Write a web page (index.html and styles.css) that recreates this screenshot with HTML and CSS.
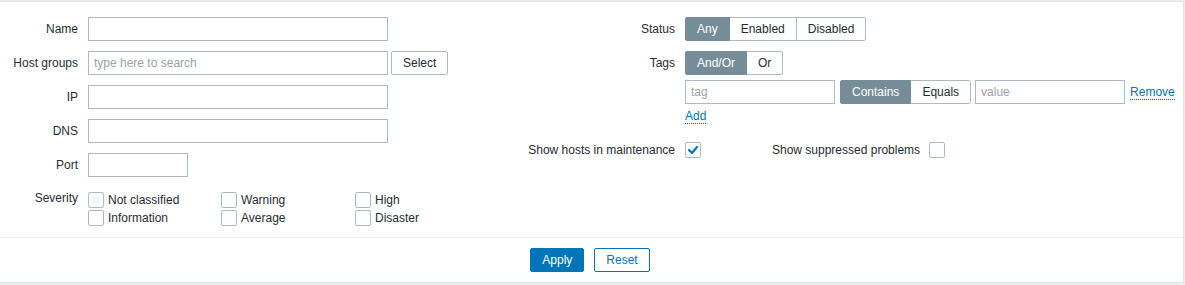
FILE: index.html
```html
<!DOCTYPE html>
<html>

<head>
    <meta name="viewport" content="width=device-width, initial-scale=1">
    <link rel="stylesheet" href="styles.css">
</head>

<body>

    <div class="filter-container">
        <div class="filter-form">

            <!-- Left column -->
            <div class="form-col col-left">
                <label class="form-label">Name</label>
                <div class="form-field"><input type="text" class="input-text wide"></div>

                <label class="form-label">Host groups</label>
                <div class="form-field">
                    <input type="text" class="input-text wide" placeholder="type here to search">
                    <button class="btn-alt btn-select">Select</button>
                </div>

                <label class="form-label">IP</label>
                <div class="form-field"><input type="text" class="input-text wide"></div>

                <label class="form-label">DNS</label>
                <div class="form-field"><input type="text" class="input-text wide"></div>

                <label class="form-label">Port</label>
                <div class="form-field"><input type="text" class="input-text narrow"></div>

                <label class="form-label label-list">Severity</label>
                <ul class="check-list">
                    <li><span class="checkbox"></span>Not classified</li>
                    <li><span class="checkbox"></span>Warning</li>
                    <li><span class="checkbox"></span>High</li>
                    <li><span class="checkbox"></span>Information</li>
                    <li><span class="checkbox"></span>Average</li>
                    <li><span class="checkbox"></span>Disaster</li>
                </ul>
            </div>

            <!-- Right column -->
            <div class="form-col col-right">
                <label class="form-label">Status</label>
                <div class="form-field">
                    <ul class="radio-list">
                        <li class="selected">Any</li>
                        <li>Enabled</li>
                        <li>Disabled</li>
                    </ul>
                </div>

                <label class="form-label">Tags</label>
                <div class="tags-field">
                    <ul class="radio-list">
                        <li class="selected">And/Or</li>
                        <li>Or</li>
                    </ul>
                    <div class="tag-row">
                        <input type="text" class="input-text tag-input" placeholder="tag">
                        <ul class="radio-list">
                            <li class="selected">Contains</li>
                            <li>Equals</li>
                        </ul>
                        <input type="text" class="input-text tag-input value-input" placeholder="value">
                        <a class="link-action remove-link">Remove</a>
                    </div>
                    <div class="add-row"><a class="link-action">Add</a></div>
                </div>

                <label class="form-label">Show hosts in maintenance</label>
                <div class="form-field">
                    <span class="checkbox checked">
                        <svg width="14" height="14" viewBox="0 0 14 14">
                            <polyline points="3,7 6,10 11,4" fill="none" stroke="#0275b8" stroke-width="2.2" stroke-linecap="round" stroke-linejoin="round" />
                        </svg>
                    </span>
                    <span class="suppressed-label">Show suppressed problems</span>
                    <span class="checkbox"></span>
                </div>
            </div>

        </div>

        <div class="filter-buttons">
            <button class="btn-apply">Apply</button>
            <button class="btn-reset">Reset</button>
        </div>
    </div>

</body>

</html>
```

FILE: styles.css
```css
html,
body {
    margin: 0;
    padding: 0;
}

body {
    background-color: #ebeef0;
    padding-top: 1px;
    padding-right: 1px;
    font-family: "Liberation Sans", Arial, sans-serif;
    font-size: 12px;
    color: #1f2c33;
}

.filter-container {
    background-color: #fff;
    border: 1px solid #dfe4e7;
    border-left: none;
    height: 282px;
    box-sizing: border-box;
}

.filter-form {
    display: flex;
    padding: 15px 0 10px;
    height: 235px;
    box-sizing: border-box;
}

.form-col {
    display: grid;
    column-gap: 10px;
    row-gap: 10px;
    align-content: start;
    align-items: start;
}

.col-left {
    width: 460px;
    grid-template-columns: 78px auto;
}

.col-right {
    grid-template-columns: 215px auto;
}

.form-label {
    text-align: right;
    line-height: 24px;
    white-space: nowrap;
}

.label-list {
    padding-top: 2px;
    line-height: 18px;
}

.form-field {
    display: flex;
    align-items: center;
    height: 24px;
}

.input-text {
    height: 24px;
    box-sizing: border-box;
    border: 1px solid #acbbc2;
    border-radius: 0;
    padding: 0 5px;
    margin: 0;
    font-family: inherit;
    font-size: 12px;
    color: #1f2c33;
    background-color: #fff;
    outline: none;
}

.input-text::placeholder {
    color: #9ba3a8;
}

.wide {
    width: 300px;
}

.narrow {
    width: 100px;
}

.btn-alt {
    height: 24px;
    box-sizing: border-box;
    border: 1px solid #acbbc2;
    border-radius: 2px;
    background-color: #fff;
    color: #1f2c33;
    font-family: inherit;
    font-size: 12px;
    padding: 0 11px;
    cursor: pointer;
}

.btn-select {
    margin-left: 3px;
    width: 57px;
}

/* Severity checkboxes */
.check-list {
    list-style: none;
    margin: 0;
    padding: 4px 0 0;
    display: grid;
    grid-template-columns: 133px 134px auto;
}

.check-list li {
    display: flex;
    align-items: center;
    height: 18px;
    white-space: nowrap;
}

.checkbox {
    display: inline-flex;
    align-items: center;
    justify-content: center;
    width: 16px;
    height: 16px;
    box-sizing: border-box;
    border: 1px solid #acbbc2;
    border-radius: 2px;
    background-color: #fff;
    flex-shrink: 0;
}

.check-list .checkbox {
    margin-right: 4px;
}

/* Segmented radio buttons */
.radio-list {
    list-style: none;
    margin: 0;
    padding: 0;
    display: flex;
}

.radio-list li {
    height: 24px;
    box-sizing: border-box;
    line-height: 22px;
    padding: 0 11px;
    border: 1px solid #acbbc2;
    margin-left: -1px;
    background-color: #fff;
    white-space: nowrap;
}

.radio-list li:first-child {
    margin-left: 0;
    border-radius: 2px 0 0 2px;
}

.radio-list li:last-child {
    border-radius: 0 2px 2px 0;
}

.radio-list li.selected {
    background-color: #768d99;
    border-color: #768d99;
    color: #fff;
    position: relative;
}

.tags-field {
    display: flex;
    flex-direction: column;
    align-items: flex-start;
}

.tag-row {
    display: flex;
    align-items: center;
    gap: 5px;
    margin-top: 5px;
}

.tag-input {
    width: 150px;
}

.value-input {
    margin-left: -1px;
}

.link-action {
    color: #0275b8;
    border-bottom: 1px dotted #0275b8;
    cursor: pointer;
}

.add-row {
    height: 24px;
    line-height: 25px;
}

.suppressed-label {
    margin-left: 71px;
    margin-right: 9px;
    white-space: nowrap;
}

/* Footer buttons */
.filter-buttons {
    border-top: 1px solid #ebeef0;
    padding: 10px 3px 10px 0;
    display: flex;
    justify-content: center;
    gap: 10px;
}

.btn-apply,
.btn-reset {
    height: 24px;
    box-sizing: border-box;
    border: 1px solid #0275b8;
    border-radius: 2px;
    padding: 0 11px;
    font-family: inherit;
    font-size: 12px;
    cursor: pointer;
}

.btn-apply {
    background-color: #0275b8;
    color: #fff;
}

.btn-reset {
    background-color: #fff;
    color: #0275b8;
}
```
